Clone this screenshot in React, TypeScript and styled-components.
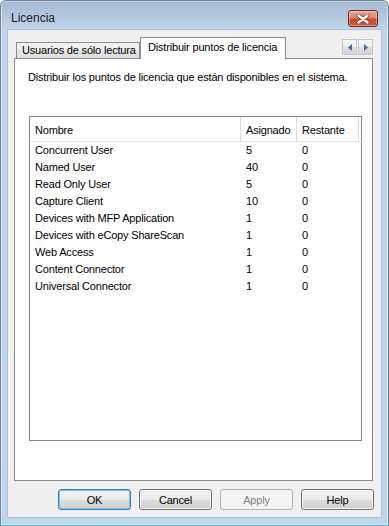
import React from "react";
import styled, { createGlobalStyle } from "styled-components";

const GlobalStyle = createGlobalStyle`
  html, body { margin: 0; padding: 0; background: #ffffff; }
  body { font-family: "Liberation Sans", Arial, sans-serif; }
  * { box-sizing: border-box; }
`;

const Window = styled.div`
  width: 389px;
  height: 526px;
  display: flex;
  flex-direction: column;
  border: 1px solid #73859b;
  border-bottom-color: #41b7dc;
  border-radius: 6px 6px 0 0;
  background: linear-gradient(180deg, #a4bad4 0px, #b8cce3 20px, #c1d5ea 30px, #bfd5ec 100%);
  box-shadow: inset 0 0 0 1px rgba(255, 255, 255, 0.45);
  padding-bottom: 8px;
  overflow: hidden;
`;

const TitleBar = styled.div`
  height: 29px;
  flex: none;
  display: flex;
  align-items: flex-start;
  justify-content: space-between;
  padding: 0 10px 0 10px;
`;

const Title = styled.div`
  margin-top: 10px;
  font-size: 12px;
  line-height: 15px;
  color: #1b1b1b;
`;

const CloseButton = styled.div`
  margin-top: 9px;
  width: 30px;
  height: 17px;
  border: 1px solid #6e2a1f;
  border-radius: 3px;
  background: linear-gradient(180deg, #e9a998 0%, #dc8570 45%, #c9482f 55%, #c85a3f 100%);
  box-shadow: inset 0 0 0 1px rgba(255, 220, 210, 0.45);
  display: flex;
  align-items: center;
  justify-content: center;
`;

const Client = styled.div`
  flex: 1;
  margin: 0 7px;
  background: #f0f0f0;
  box-shadow: 0 0 0 1px #aec3da;
  display: flex;
  flex-direction: column;
  padding: 0 8px 7px 6px;
`;

const TabStrip = styled.div`
  height: 29px;
  flex: none;
  margin-bottom: -1px;
  padding-left: 2px;
  display: flex;
  align-items: flex-end;
`;

const Tab = styled.div<{ $active?: boolean; $w: number }>`
  width: ${(p) => p.$w}px;
  height: ${(p) => (p.$active ? 22 : 16)}px;
  margin-bottom: ${(p) => (p.$active ? 0 : 1)}px;
  border: 1px solid #898c95;
  border-bottom: none;
  background: ${(p) => (p.$active ? "#ffffff" : "linear-gradient(180deg, #f3f3f3 0%, #ededed 50%, #e4e4e4 51%, #dcdcdc 100%)")};
  position: ${(p) => (p.$active ? "relative" : "static")};
  z-index: ${(p) => (p.$active ? 1 : "auto")};
  font-size: 11px;
  letter-spacing: -0.18px;
  line-height: 14px;
  color: #000;
  padding: ${(p) => (p.$active ? "2px 0 0 7px" : "0 0 0 5px")};
  white-space: nowrap;
`;

const ScrollPair = styled.div`
  margin-left: auto;
  align-self: flex-start;
  margin-top: 9px;
  display: flex;
  gap: 1px;
`;

const ScrollBtn = styled.div`
  width: 15px;
  height: 16px;
  border: 1px solid #c4c7cc;
  background: linear-gradient(180deg, #f6f6f6 0%, #ececec 50%, #dedede 51%, #d6d6d6 100%);
  display: flex;
  align-items: center;
  justify-content: center;
`;

const Panel = styled.div`
  height: 423px;
  flex: none;
  border: 1px solid #898c95;
  background: #ffffff;
  display: flex;
  flex-direction: column;
  padding: 11px 10px 39px 13px;
`;

const Description = styled.div`
  font-size: 11px;
  letter-spacing: -0.18px;
  line-height: 14px;
  color: #000;
  white-space: nowrap;
`;

const ListBox = styled.div`
  margin-top: 32px;
  margin-left: 1px;
  flex: 1;
  border: 1px solid #828790;
  background: #ffffff;
  display: flex;
  flex-direction: column;
`;

const Grid = styled.div`
  display: grid;
  grid-template-columns: 211px 56px 62px 1fr;
`;

const HeaderCell = styled.div<{ $last?: boolean }>`
  height: 25px;
  padding: 2px 0 0 5px;
  line-height: 22px;
  font-size: 11px;
  letter-spacing: -0.18px;
  color: #000;
  border-bottom: 1px solid #e5e5e5;
  border-right: ${(p) => (p.$last ? "none" : "1px solid #dcdcdc")};
  white-space: nowrap;
`;

const Cell = styled.div`
  height: 17px;
  padding-left: 5px;
  line-height: 17px;
  font-size: 11px;
  letter-spacing: -0.18px;
  color: #000;
  white-space: nowrap;
`;

const ButtonRow = styled.div`
  margin-top: 8px;
  margin-right: -1px;
  display: flex;
  justify-content: flex-end;
  gap: 8px;
`;

const Button = styled.div<{ $variant?: "default" | "disabled" }>`
  width: 73px;
  height: 21px;
  border-radius: 3px;
  display: flex;
  align-items: center;
  justify-content: center;
  font-size: 11px;
  letter-spacing: -0.18px;
  border: 1px solid
    ${(p) => (p.$variant === "default" ? "#3c7fb1" : p.$variant === "disabled" ? "#adb2b5" : "#707070")};
  background: ${(p) =>
    p.$variant === "disabled"
      ? "#f4f4f4"
      : "linear-gradient(180deg, #f2f2f2 0%, #ebebeb 50%, #dddddd 51%, #cfcfcf 100%)"};
  color: ${(p) => (p.$variant === "disabled" ? "#838383" : "#000")};
  box-shadow: ${(p) =>
    p.$variant === "default"
      ? "inset 0 0 0 1px #6fc4ee"
      : p.$variant === "disabled"
      ? "none"
      : "inset 0 0 0 1px rgba(255,255,255,0.8)"};
`;

const rows: [string, string, string][] = [
  ["Concurrent User", "5", "0"],
  ["Named User", "40", "0"],
  ["Read Only User", "5", "0"],
  ["Capture Client", "10", "0"],
  ["Devices with MFP Application", "1", "0"],
  ["Devices with eCopy ShareScan", "1", "0"],
  ["Web Access", "1", "0"],
  ["Content Connector", "1", "0"],
  ["Universal Connector", "1", "0"],
];

export default function App() {
  return (
    <>
      <GlobalStyle />
      <Window>
        <TitleBar>
          <Title>Licencia</Title>
          <CloseButton>
            <svg width="14" height="10" viewBox="0 0 14 10">
              <path d="M2.5 1.5 L11.5 8.5 M11.5 1.5 L2.5 8.5" stroke="#7a3326" strokeWidth="4" strokeLinecap="round" />
              <path d="M2.5 1.5 L11.5 8.5 M11.5 1.5 L2.5 8.5" stroke="#ffffff" strokeWidth="2.4" strokeLinecap="round" />
            </svg>
          </CloseButton>
        </TitleBar>
        <Client>
          <TabStrip>
            <Tab $w={124}>Usuarios de sólo lectura</Tab>
            <Tab $active $w={146}>Distribuir puntos de licencia</Tab>
            <ScrollPair>
              <ScrollBtn>
                <svg width="4" height="7" viewBox="0 0 4 7">
                  <path d="M4 0 L0 3.5 L4 7 Z" fill="#4565a8" />
                </svg>
              </ScrollBtn>
              <ScrollBtn>
                <svg width="4" height="7" viewBox="0 0 4 7">
                  <path d="M0 0 L4 3.5 L0 7 Z" fill="#4565a8" />
                </svg>
              </ScrollBtn>
            </ScrollPair>
          </TabStrip>
          <Panel>
            <Description>Distribuir los puntos de licencia que están disponibles en el sistema.</Description>
            <ListBox>
              <Grid>
                <HeaderCell>Nombre</HeaderCell>
                <HeaderCell>Asignado</HeaderCell>
                <HeaderCell>Restante</HeaderCell>
                <HeaderCell $last />
                {rows.map(([name, a, r]) => (
                  <React.Fragment key={name}>
                    <Cell>{name}</Cell>
                    <Cell>{a}</Cell>
                    <Cell>{r}</Cell>
                    <Cell />
                  </React.Fragment>
                ))}
              </Grid>
            </ListBox>
          </Panel>
          <ButtonRow>
            <Button $variant="default">OK</Button>
            <Button>Cancel</Button>
            <Button $variant="disabled">Apply</Button>
            <Button>Help</Button>
          </ButtonRow>
        </Client>
      </Window>
    </>
  );
}
